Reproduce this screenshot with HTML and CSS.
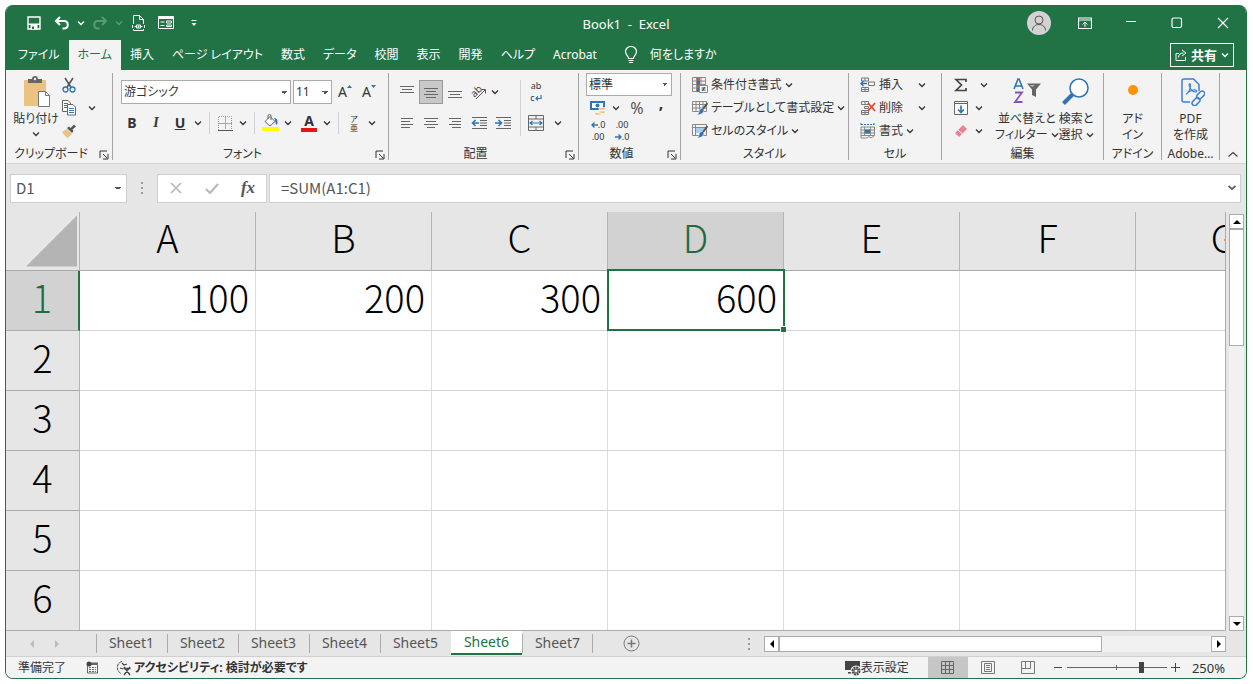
FILE: index.html
```html
<!DOCTYPE html>
<html lang="ja">
<head>
    <meta charset="UTF-8">
    <title>Book1 - Excel</title>
    <link rel="stylesheet" href="styles.css">
</head>
<body>
    <svg class="sprites" aria-hidden="true">
        <symbol id="chevron" viewBox="0 0 8 8"><path d="M1 2.500 4 5.500l3-3" fill="none" stroke="currentColor" stroke-width="1.300"/></symbol>
        <symbol id="launcher" viewBox="0 0 10 10"><path d="M1 8V1h7M4 4l4 4M9 4v5H4" fill="none" stroke="currentColor"/></symbol>
    </svg>

    <div class="window">
        <header class="titlebar">
            <div class="quick-access">
                <button class="qa-btn" aria-label="上書き保存"><svg width="16" height="16" viewBox="0 0 16 16"><path d="M2 2h12v12H2z" fill="none" stroke="#fff" stroke-width="1.400"/><path d="M2 8.500h12V10H2zM4.500 10h7v4.500h-7z" fill="#fff"/><path d="M6 11.500h2v2.500H6z" fill="#217346"/></svg></button>
                <button class="qa-btn" aria-label="元に戻す"><svg width="16" height="16" viewBox="0 0 16 16"><path d="M6 2 2 6l4 4M2.500 6H10c5 0 5 7.500 0 7.500H8.500" fill="none" stroke="#fff" stroke-width="2"/></svg></button>
                <button class="qa-more" aria-label="元に戻す一覧"><svg width="8" height="8"><use href="#chevron"/></svg></button>
                <button class="qa-btn dim" aria-label="やり直し"><svg width="16" height="16" viewBox="0 0 16 16"><path d="m10 2 4 4-4 4M13.500 6H6c-5 0-5 7.500 0 7.500h1.500" fill="none" stroke="currentColor" stroke-width="2"/></svg></button>
                <button class="qa-more dim" aria-label="やり直し一覧"><svg width="8" height="8"><use href="#chevron"/></svg></button>
                <button class="qa-btn" aria-label="印刷プレビュー"><svg width="16" height="16" viewBox="0 0 16 16" fill="none" stroke="#fff"><path d="M3.500 9V.5h6l4 4V9M9.500.5v4h4M3.500 14v1.500h10V14"/><path d="M2.500 10v3M14.500 10v3M4.500 11.500h1.500M11 11.500h1.500"/><path d="M6.500 10h4v3h-4z"/><circle cx="8.500" cy="11.500" r=".6"/></svg></button>
                <button class="qa-btn" aria-label="フォーム"><svg width="16" height="16" viewBox="0 0 16 16" fill="none" stroke="#fff"><path d="M.5 1.500h15v12H.5z"/><path d="M.5 3h15" stroke-width="2"/><path d="M2.500 7h4M2.500 10.500h4M8.500 6h5v2h-5zM8.500 10h5v1.500h-5z"/></svg></button>
                <button class="qa-btn" aria-label="クイックアクセスツールバーのカスタマイズ"><svg width="8" height="8" viewBox="0 0 8 8" fill="#fff"><path d="M1.500 1h5v1h-5zM1.500 4h5L4 7z"/></svg></button>
            </div>
            <div class="doc-title">Book1&nbsp; -&nbsp; Excel</div>
            <div class="window-buttons">
                <button class="avatar" aria-label="アカウント"><svg width="16" height="16" viewBox="0 0 16 16" fill="none" stroke="#555"><circle cx="8" cy="5" r="4"/><path d="M1.500 15.500c0-8 13-8 13 0"/></svg></button>
                <button class="win-btn" aria-label="リボンの表示オプション"><svg width="14" height="12" viewBox="0 0 14 12" fill="none" stroke="#fff"><path d="M.5 1h13v10.500H.5zM.5 3h13" stroke-width="1.200"/><path d="M7 10V5.500M4.500 7.500 7 5l2.500 2.500"/></svg></button>
                <button class="win-btn" aria-label="最小化"><svg width="12" height="12" viewBox="0 0 12 12"><path d="M1 4.500h10" stroke="#fff" stroke-width="1.200"/></svg></button>
                <button class="win-btn" aria-label="最大化"><svg width="12" height="12" viewBox="0 0 12 12"><rect x="1" y="1" width="9.500" height="9.500" rx="1.500" fill="none" stroke="#fff" stroke-width="1.200"/></svg></button>
                <button class="win-btn" aria-label="閉じる"><svg width="12" height="12" viewBox="0 0 12 12"><path d="m1 1 10 10M11 1 1 11" stroke="#fff" stroke-width="1.200"/></svg></button>
            </div>
        </header>

        <nav class="tabs">
            <button class="tab">ファイル</button>
            <button class="tab active">ホーム</button>
            <button class="tab">挿入</button>
            <button class="tab">ページ レイアウト</button>
            <button class="tab">数式</button>
            <button class="tab">データ</button>
            <button class="tab">校閲</button>
            <button class="tab">表示</button>
            <button class="tab">開発</button>
            <button class="tab">ヘルプ</button>
            <button class="tab">Acrobat</button>
            <button class="tab tell-me"><svg width="14" height="18" viewBox="0 0 14 18" fill="none" stroke="#fff" stroke-width="1.200"><path d="M4.500 12.500c0-3-3-3.500-3-7a5.500 5 0 0 1 11 0c0 3.500-3 4-3 7zM4.500 14.500h5M5 16.500h4"/></svg>何をしますか</button>
            <button class="share"><svg width="12" height="12" viewBox="0 0 12 12" fill="none" stroke="#fff"><path d="M4 4.500H1v7h9.500V8M3.500 8.500c0-3 2-4.500 5-4.500M7 1l4 3-4 3"/></svg>共有<svg width="8" height="8"><use href="#chevron"/></svg></button>
        </nav>

        <section class="ribbon">
            <div class="group">
                <div class="group-body clipboard">
                    <button class="big"><svg width="30" height="32" viewBox="0 0 30 32"><path d="M3 4h22v26H3z" fill="#eac282"/><path d="M7 3h4a3 3 0 0 1 6 0h4v4H7z" fill="#666"/><circle cx="14" cy="3" r="1.200" fill="#f3f3f3"/><path d="M17.500 15.500h7l4 4v11h-11z" fill="#fff" stroke="#777"/><path d="M24.500 15.500v4h4" fill="none" stroke="#777"/></svg><span>貼り付け</span><svg width="8" height="8"><use href="#chevron"/></svg></button>
                    <div class="stack">
                        <button class="tool short" aria-label="切り取り"><svg width="14" height="16" viewBox="0 0 14 16" fill="none"><path d="m3 1 6.500 10M11 1 4.500 11" stroke="#555" stroke-width="1.600"/><circle cx="3.500" cy="12.500" r="2.500" stroke="#2f75b5" stroke-width="1.300"/><circle cx="10.500" cy="12.500" r="2.500" stroke="#2f75b5" stroke-width="1.300"/></svg></button>
                        <div class="row"><button class="tool short" aria-label="コピー"><svg width="14" height="16" viewBox="0 0 14 16" fill="#fff" stroke="#666"><path d="M.5.500H6L8.500 3v8.500h-8z"/><path d="M2 3.500h4M2 5.500h4M2 7.500h4" stroke="#2f75b5"/><path d="M5.500 4.500H11L13.500 7v8h-8z"/><path d="M7 8.500h5M7 10.500h5M7 12.500h5" stroke="#2f75b5"/></svg></button><button class="more" aria-label="コピーのオプション"><svg width="8" height="8"><use href="#chevron"/></svg></button></div>
                        <button class="tool short" aria-label="書式のコピー/貼り付け"><svg width="14" height="14" viewBox="0 0 14 14"><path d="m0 8 5-3 5 5-4 4c-2-1-4-3-6-6z" fill="#eac282"/><path d="m5 4 5 5 1.500-2-1-1.500L14 2.500 12 .5 8.500 4 7 2.500z" fill="#555"/></svg></button>
                    </div>
                </div>
                <div class="group-label with-launch">クリップボード<button class="launch" aria-label="クリップボードの設定"><svg width="10" height="10"><use href="#launcher"/></svg></button></div>
            </div>

            <div class="group">
                <div class="group-body font">
                    <div class="row font-pick">
                        <select class="combo font-name" aria-label="フォント"><option>游ゴシック</option></select>
                        <select class="combo font-size" aria-label="フォント サイズ"><option>11</option></select>
                        <button class="tool" aria-label="拡大">A<svg width="5" height="14" viewBox="0 0 5 14"><path d="M0 3h5L2.500 0z" fill="#2f75b5"/></svg></button>
                        <button class="tool" aria-label="縮小">A<svg width="5" height="14" viewBox="0 0 5 14"><path d="M0 0h5L2.500 3z" fill="#2f75b5"/></svg></button>
                    </div>
                    <div class="row">
                        <button class="tool"><b>B</b></button>
                        <button class="tool"><b class="italic">I</b></button>
                        <button class="tool"><b class="underline">U</b></button>
                        <button class="more" aria-label="下線"><svg width="8" height="8"><use href="#chevron"/></svg></button>
                        <i class="sep"></i>
                        <button class="tool" aria-label="罫線"><svg width="15" height="15" viewBox="0 0 15 15" fill="none" stroke="#999"><path d="M.5 14V.5h13V14" stroke-dasharray="1 1"/><path d="M7.500 1v12M1 7.500h13" stroke="#aaa"/><path d="M0 14.500h15" stroke="#555"/></svg></button>
                        <button class="more" aria-label="罫線の種類"><svg width="8" height="8"><use href="#chevron"/></svg></button>
                        <i class="sep"></i>
                        <button class="tool" aria-label="塗りつぶしの色"><svg width="17" height="18" viewBox="0 0 17 18"><path d="m3 7.500 5-5 5 5-5 4.500z" fill="#fff" stroke="#666"/><path d="M6 5V2a1.500 1.500 0 0 1 3 0v4" fill="none" stroke="#666"/><path d="M12 4c4 0 4 4 3 7-2-1-1-4-3-7z" fill="#2f75b5"/><path d="M0 13h17v4H0z" fill="#ff0"/></svg></button>
                        <button class="more" aria-label="塗りつぶしの色の一覧"><svg width="8" height="8"><use href="#chevron"/></svg></button>
                        <button class="tool font-color" aria-label="フォントの色"><b>A</b></button>
                        <button class="more" aria-label="フォントの色の一覧"><svg width="8" height="8"><use href="#chevron"/></svg></button>
                        <i class="sep"></i>
                        <button class="tool ruby"><span>ア</span><span>亜</span></button>
                        <button class="more" aria-label="ふりがな"><svg width="8" height="8"><use href="#chevron"/></svg></button>
                    </div>
                </div>
                <div class="group-label with-launch">フォント<button class="launch" aria-label="フォントの設定"><svg width="10" height="10"><use href="#launcher"/></svg></button></div>
            </div>

            <div class="group">
                <div class="group-body align">
                    <div class="align-tools">
                        <button class="tool" aria-label="上揃え"><svg width="14" height="16" viewBox="0 0 14 16" stroke="#666"><path d="M0 2.500h14M2 5.500h10M0 8.500h14"/></svg></button>
                        <button class="tool pressed" aria-label="上下中央揃え"><svg width="14" height="16" viewBox="0 0 14 16" stroke="#666"><path d="M0 4.500h14M2 7.500h10M0 10.500h14M2 13.500h10"/></svg></button>
                        <button class="tool" aria-label="下揃え"><svg width="14" height="16" viewBox="0 0 14 16" stroke="#666"><path d="M0 7.500h14M2 10.500h10M0 13.500h14"/></svg></button>
                        <button class="tool" aria-label="方向"><svg class="orient" width="16" height="16" viewBox="0 0 16 16"><text x="0" y="11" transform="rotate(-45 5 8)">ab</text><path d="m5 15 9-9M10.500 5.500H14.500v4" fill="none" stroke="#555"/></svg></button>
                        <button class="more" aria-label="方向のオプション"><svg width="8" height="8"><use href="#chevron"/></svg></button>
                        <button class="tool" aria-label="左揃え"><svg width="12" height="12" viewBox="0 0 12 12" stroke="#666"><path d="M0 1.500h12M0 4.500h9M0 7.500h12M0 10.500h9"/></svg></button>
                        <button class="tool" aria-label="中央揃え"><svg width="14" height="12" viewBox="0 0 14 12" stroke="#666"><path d="M0 1.500h14M2 4.500h10M0 7.500h14M3 10.500h8"/></svg></button>
                        <button class="tool" aria-label="右揃え"><svg width="12" height="12" viewBox="0 0 12 12" stroke="#666"><path d="M0 1.500h12M3 4.500h9M0 7.500h12M3 10.500h9"/></svg></button>
                        <button class="tool" aria-label="インデントを減らす"><svg width="16" height="14" viewBox="0 0 16 14" fill="none" stroke="#666"><path d="M1 1.500h15M9 4.500h7M9 7h7M9 9.500h7M1 12.500h15"/><path d="M8 7H1.500M4.500 4l-3 3 3 3" stroke="#2f75b5" stroke-width="1.600"/></svg></button>
                        <button class="tool" aria-label="インデントを増やす"><svg width="16" height="14" viewBox="0 0 16 14" fill="none" stroke="#666"><path d="M1 1.500h15M9 4.500h7M9 7h7M9 9.500h7M1 12.500h15"/><path d="M0 7h6.500M3.500 4l3 3-3 3" stroke="#2f75b5" stroke-width="1.600"/></svg></button>
                    </div>
                    <i class="sep tall"></i>
                    <div class="merge-tools">
                        <button class="tool wrap-text"><span>ab</span><span>c<svg width="7" height="6" viewBox="0 0 7 6" fill="none" stroke="#2f75b5" stroke-width="1.200"><path d="M6 0v3.500H1M3 1.500l-2 2 2 2"/></svg></span></button>
                        <div class="row">
                            <button class="tool" aria-label="セルを結合して中央揃え"><svg width="16" height="16" viewBox="0 0 16 16" fill="none" stroke="#666"><path d="M.5.500h15v15H.5zM.5 4h15M.5 12h15M8 .5V4M8 12v3.500"/><path d="M2 8h12M4.500 6 2 8l2.500 2M11.500 6 14 8l-2.500 2" stroke="#2f75b5" stroke-width="1.200"/></svg></button>
                            <button class="more" aria-label="結合のオプション"><svg width="8" height="8"><use href="#chevron"/></svg></button>
                        </div>
                    </div>
                </div>
                <div class="group-label with-launch">配置<button class="launch" aria-label="配置の設定"><svg width="10" height="10"><use href="#launcher"/></svg></button></div>
            </div>

            <div class="group">
                <div class="group-body number">
                    <select class="combo format" aria-label="数値の書式"><option>標準</option></select>
                    <div class="row">
                        <button class="tool short" aria-label="通貨表示形式"><svg width="16" height="16" viewBox="0 0 16 16"><path d="M1 2h13v7H1z" fill="#fff" stroke="#2f75b5" stroke-width="2"/><circle cx="7.500" cy="5.500" r="2" fill="#2f75b5"/><path d="M9 7.500h6v2.500H9zM9 11h6v2.500H9zM5 12.500h6v2.500H5z" fill="#eac282" stroke="#fff" stroke-width=".5"/></svg></button>
                        <button class="more" aria-label="通貨の一覧"><svg width="8" height="8"><use href="#chevron"/></svg></button>
                        <button class="tool short percent">%</button>
                        <button class="tool short comma">,</button>
                    </div>
                    <div class="row">
                        <button class="tool short decimal"><span><svg width="7" height="6" viewBox="0 0 7 6" fill="none" stroke="#2f75b5" stroke-width="1.400"><path d="M7 3H1M3.500.5 1 3l2.500 2.500"/></svg>.0</span><span>.00</span></button>
                        <button class="tool short decimal"><span>.00</span><span><svg width="7" height="6" viewBox="0 0 7 6" fill="none" stroke="#2f75b5" stroke-width="1.400"><path d="M0 3h6M3.500.5 6 3 3.500 5.500"/></svg>.0</span></button>
                    </div>
                </div>
                <div class="group-label with-launch">数値<button class="launch" aria-label="数値の設定"><svg width="10" height="10"><use href="#launcher"/></svg></button></div>
            </div>

            <div class="group">
                <div class="group-body list">
                    <button class="item"><svg width="16" height="16" viewBox="0 0 16 16" fill="none" stroke="#888"><path d="M.5.500h13v14H.5zM.5 4h13M.5 7.500h13M.5 11h13M4.500.5v14M9 .5v14"/><path d="M5 1h3v3H5zM5 8h3v3H5z" fill="#e0532f" stroke="none"/><path d="M5 4h3v4H5zM5 11h2v4H5z" fill="#2f75b5" stroke="none"/><path d="M7.500 8.500h8v7h-8z" fill="#fff"/><path d="M9.500 11h4M9.500 13h4M12.500 10l-2 4" stroke="#444"/></svg>条件付き書式<svg width="8" height="8"><use href="#chevron"/></svg></button>
                    <button class="item"><svg width="16" height="16" viewBox="0 0 16 16" fill="none" stroke="#888"><path d="M.5 1.500h14v10H.5zM.5 4.500h14M.5 8h14M4 1.500v10M7.500 1.500v10M11 1.500v10"/><path d="M7 12c0-3 2-4 4-3.500l1 1.500c0 3-3 5-8 5 2-.5 2.500-1.500 3-3z" fill="#2f75b5" stroke="#fff" stroke-width=".6"/><path d="m11 9 4.500-6" stroke="#555" stroke-width="2"/></svg>テーブルとして書式設定<svg width="8" height="8"><use href="#chevron"/></svg></button>
                    <button class="item"><svg width="16" height="16" viewBox="0 0 16 16" fill="none" stroke="#888"><path d="M.5 1.500h14v11H.5zM.5 4.500h14M3.500 1.500v11"/><path d="M4 5h8v5H4z" fill="#a9cdec" stroke="none"/><path d="M7 12c0-3 2-4 4-3.500l1 1.500c0 3-3 5-8 5 2-.5 2.500-1.500 3-3z" fill="#2f75b5" stroke="#fff" stroke-width=".6"/><path d="m11 9 4.500-6" stroke="#555" stroke-width="2"/></svg>セルのスタイル<svg width="8" height="8"><use href="#chevron"/></svg></button>
                </div>
                <div class="group-label">スタイル</div>
            </div>

            <div class="group">
                <div class="group-body list">
                    <button class="item spread"><svg width="16" height="16" viewBox="0 0 16 16" fill="none" stroke="#777"><path d="M1.500 1h7v3h-7zM5 1v3M1.500 10.500h7v4h-7zM5 10.500v4M1.500 12.500h7M8.500 5h6v3.500h-6z"/><path d="M7 6.500H1M3.500 4 1 6.500 3.500 9" stroke="#2f75b5" stroke-width="1.500"/></svg><span>挿入</span><svg width="8" height="8"><use href="#chevron"/></svg></button>
                    <button class="item spread"><svg width="16" height="16" viewBox="0 0 16 16" fill="none" stroke="#777"><path d="M1.500 1.500h7v3h-7zM5 1.500v3M1.500 10.500h7v4h-7zM5 10.500v4M1.500 12.500h7M4.500 6.500h4v2h-4z"/><path d="m8 3 7 8M15 3l-7 8" stroke="#e0452a" stroke-width="1.700"/></svg><span>削除</span><svg width="8" height="8"><use href="#chevron"/></svg></button>
                    <button class="item"><svg width="16" height="16" viewBox="0 0 16 16" fill="none" stroke="#888"><path d="M1 1.500h13M1 0v3M14 0v3" stroke="#2f75b5" stroke-dasharray="2 1"/><path d="M1 4h13.500v8.500H1zM1 7h13M1 10h13M4.500 4v9M10.500 4v9M1 12.500v2.500h6l2-1.500 2 1.500 3-2"/><path d="M5 6.500h5v4H5z" fill="#2f75b5" stroke="none"/></svg>書式<svg width="8" height="8"><use href="#chevron"/></svg></button>
                </div>
                <div class="group-label">セル</div>
            </div>

            <div class="group">
                <div class="group-body editing">
                    <div class="stack">
                        <div class="row wide"><button class="tool short" aria-label="オート SUM"><svg width="14" height="14" viewBox="0 0 14 14" fill="none" stroke="#444" stroke-width="1.700"><path d="M12 4V1.500H2L7.500 7 2 12.500h10V10"/></svg></button><button class="more" aria-label="オート SUM の一覧"><svg width="8" height="8"><use href="#chevron"/></svg></button></div>
                        <div class="row"><button class="tool short" aria-label="フィル"><svg width="14" height="14" viewBox="0 0 14 14" fill="#fff" stroke="#666"><path d="M.5.500h13v13H.5zM.5 2.500h13"/><path d="M7 4.500v7M4 8.500l3 3 3-3" fill="none" stroke="#2f75b5" stroke-width="1.700"/></svg></button><button class="more" aria-label="フィルの一覧"><svg width="8" height="8"><use href="#chevron"/></svg></button></div>
                        <div class="row"><button class="tool short" aria-label="クリア"><svg width="14" height="14" viewBox="0 0 14 14"><path d="m1 9 8-8 4 4-8 8z" fill="#e8829a"/><path d="m4 6 4.500 4" stroke="#fff"/></svg></button><button class="more" aria-label="クリアの一覧"><svg width="8" height="8"><use href="#chevron"/></svg></button></div>
                    </div>
                    <button class="big"><svg width="30" height="30" viewBox="0 0 30 30" fill="none"><path d="M2 13 6 3h1l4 10M3.500 10h6" stroke="#2f75b5" stroke-width="1.600"/><path d="M3 16.500h7L3 26h7.500" stroke="#8a52b8" stroke-width="1.800"/><path d="M15 7.500h14l-5 6V21l-4-2v-5.500z" fill="#666"/><path d="M17.500 9h5l-2 2z" fill="#bbb"/></svg><span>並べ替えと</span><span>フィルター <svg width="8" height="8"><use href="#chevron"/></svg></span></button>
                    <button class="big"><svg width="30" height="30" viewBox="0 0 30 30" fill="none"><circle cx="18" cy="12" r="9" fill="#fff" stroke="#2f75b5" stroke-width="1.600"/><path d="m11.500 18.500-9 9" stroke="#2f75b5" stroke-width="4"/></svg><span>検索と</span><span>選択 <svg width="8" height="8"><use href="#chevron"/></svg></span></button>
                </div>
                <div class="group-label">編集</div>
            </div>

            <div class="group">
                <div class="group-body centered">
                    <button class="big"><svg width="30" height="30" viewBox="0 0 30 30"><circle cx="15" cy="14" r="5" fill="#ff9208"/></svg><span>アド</span><span>イン</span></button>
                </div>
                <div class="group-label">アドイン</div>
            </div>

            <div class="group">
                <div class="group-body centered">
                    <button class="big"><svg width="30" height="30" viewBox="0 0 30 30" fill="none" stroke="#3f7fd9" stroke-width="1.500"><path d="M15 26H9a2 2 0 0 1-2-2V5a2 2 0 0 1 2-2h9.500L24 8.500V15"/><path d="M11 18.500c2-1.500 5-6 4.500-10-.5-2-2-.5-1 2s3.500 5.500 6 5.500 1-2.500-2-2-5.500 2-7.500 4.500z" stroke-width="1.100"/><rect x="21" y="17" width="9" height="5" rx="2.500" transform="rotate(-45 25 19)"/><rect x="16" y="23" width="9" height="5" rx="2.500" transform="rotate(-45 21 25)"/></svg><span>PDF</span><span>を作成</span></button>
                </div>
                <div class="group-label">Adobe…</div>
            </div>
            <button class="collapse" aria-label="リボンを折りたたむ"><svg width="12" height="8" viewBox="0 0 12 8"><path d="m1.500 6.500 4.500-4 4.500 4" fill="none" stroke="#444" stroke-width="1.200"/></svg></button>
        </section>

        <section class="formula-bar">
            <select class="combo name-box" aria-label="名前ボックス"><option>D1</option></select>
            <svg class="grip" width="3" height="12" viewBox="0 0 3 12" fill="#999"><path d="M0 0h2v2H0zM0 5h2v2H0zM0 10h2v2H0z"/></svg>
            <div class="fx-box">
                <button class="fx-btn" aria-label="キャンセル"><svg width="14" height="14" viewBox="0 0 14 14"><path d="m2 2 10 10M12 2 2 12" stroke="#b8b8b8" stroke-width="1.600"/></svg></button>
                <button class="fx-btn" aria-label="入力"><svg width="14" height="14" viewBox="0 0 14 14"><path d="m1 8 4 4 8-9" fill="none" stroke="#b8b8b8" stroke-width="2.200"/></svg></button>
                <button class="fx-btn fx">fx</button>
            </div>
            <div class="formula">
                <input type="text" value="=SUM(A1:C1)" aria-label="数式バー">
                <svg width="10" height="8" viewBox="0 0 10 8"><path d="m1.500 2 3.500 3L8.500 2" fill="none" stroke="#666" stroke-width="2"/></svg>
            </div>
        </section>

        <main class="sheet-area">
            <div class="sheet">
                <table>
                    <thead>
                        <tr><th class="select-all"></th><th>A</th><th>B</th><th>C</th><th class="current">D</th><th>E</th><th>F</th><th>G</th></tr>
                    </thead>
                    <tbody>
                        <tr><th class="current">1</th><td>100</td><td>200</td><td>300</td><td class="selected">600</td><td></td><td></td><td></td></tr>
                        <tr><th>2</th><td></td><td></td><td></td><td></td><td></td><td></td><td></td></tr>
                        <tr><th>3</th><td></td><td></td><td></td><td></td><td></td><td></td><td></td></tr>
                        <tr><th>4</th><td></td><td></td><td></td><td></td><td></td><td></td><td></td></tr>
                        <tr><th>5</th><td></td><td></td><td></td><td></td><td></td><td></td><td></td></tr>
                        <tr><th>6</th><td></td><td></td><td></td><td></td><td></td><td></td><td></td></tr>
                    </tbody>
                </table>
            </div>
            <div class="v-scroll">
                <button class="scroll-btn" aria-label="上へ"><svg width="8" height="8" viewBox="0 0 8 8"><path d="M0 6h8L4 2z"/></svg></button>
                <div class="thumb"></div>
                <button class="scroll-btn end" aria-label="下へ"><svg width="8" height="8" viewBox="0 0 8 8"><path d="M0 2h8L4 6z"/></svg></button>
            </div>
        </main>

        <div class="sheet-bar">
            <div class="sheet-nav">
                <button aria-label="前のシート"><svg width="6" height="8" viewBox="0 0 6 8"><path d="M5 0v8L1 4z" fill="#bbb"/></svg></button>
                <button aria-label="次のシート"><svg width="6" height="8" viewBox="0 0 6 8"><path d="M1 0v8l4-4z" fill="#bbb"/></svg></button>
            </div>
            <div class="sheet-tabs">
                <button class="sheet-tab">Sheet1</button>
                <button class="sheet-tab">Sheet2</button>
                <button class="sheet-tab">Sheet3</button>
                <button class="sheet-tab">Sheet4</button>
                <button class="sheet-tab">Sheet5</button>
                <button class="sheet-tab active">Sheet6</button>
                <button class="sheet-tab">Sheet7</button>
            </div>
            <button class="add-sheet" aria-label="新しいシート"><svg width="17" height="17" viewBox="0 0 17 17" fill="none" stroke="#777"><circle cx="8.500" cy="8.500" r="7.500"/><path d="M8.500 4.500v8M4.500 8.500h8" stroke-width="1.500"/></svg></button>
            <svg class="grip" width="3" height="12" viewBox="0 0 3 12" fill="#999"><path d="M0 0h2v2H0zM0 5h2v2H0zM0 10h2v2H0z"/></svg>
            <div class="h-scroll">
                <button class="scroll-btn" aria-label="左へ"><svg width="8" height="8" viewBox="0 0 8 8"><path d="M6 0v8L2 4z"/></svg></button>
                <div class="thumb"></div>
                <button class="scroll-btn end" aria-label="右へ"><svg width="8" height="8" viewBox="0 0 8 8"><path d="M2 0v8l4-4z"/></svg></button>
            </div>
        </div>

        <footer class="status-bar">
            <span class="ready">準備完了</span>
            <button class="macro" aria-label="マクロの記録"><svg width="13" height="13" viewBox="0 0 13 13" fill="none" stroke="#666"><path d="M1.500 3.500h10v8.500h-10z"/><path d="M3 6.500h7M3 8.500h7M3 10.500h7" stroke-dasharray="2 1"/><path d="M5 2.500h7" stroke-width="2"/><circle cx="3" cy="3" r="2.500" fill="#444" stroke="none"/></svg></button>
            <button class="access"><svg width="16" height="16" viewBox="0 0 16 16" fill="none" stroke="#444"><path d="M6 1.500C0 3 0 11 5 13.500" stroke-dasharray="3 1"/><path d="m6 3 2 2 3-1M4 8l3 1M8 7l6 8M14 7l-6 8M7.500 8.500h7" stroke-width="1.300"/></svg>アクセシビリティ: 検討が必要です</button>
            <button class="display"><svg width="16" height="16" viewBox="0 0 16 16"><path d="M0 1h15v9H0zM3 12h6v1.500H3z" fill="#444"/><circle cx="11" cy="11" r="3.500" fill="#f3f3f3" stroke="#f3f3f3" stroke-width="4"/><circle cx="11" cy="11" r="3.500" fill="none" stroke="#444" stroke-width="2" stroke-dasharray="2 .7"/><circle cx="11" cy="11" r="2" fill="none" stroke="#444"/></svg>表示設定</button>
            <button class="view active" aria-label="標準"><svg width="14" height="14" viewBox="0 0 14 14" fill="none" stroke="#666"><path d="M.5.500h12v12H.5zM4.500.5v12M8.500.5v12M.5 4.500h12M.5 8.500h12"/></svg></button>
            <button class="view" aria-label="ページ レイアウト"><svg width="14" height="14" viewBox="0 0 14 14" fill="none" stroke="#777"><path d="M.5.500h13v12H.5zM3.500 2.500h7v8h-7zM5 4.500h4M5 6.500h4M5 8.500h4"/></svg></button>
            <button class="view" aria-label="改ページ プレビュー"><svg width="14" height="14" viewBox="0 0 14 14" fill="none" stroke="#777"><path d="M.5.500h13v12H.5zM4.500.5v7M9.500.5v7M.5 7.500h9"/></svg></button>
            <div class="zoom">
                <button aria-label="縮小"><svg width="9" height="9" viewBox="0 0 9 9"><path d="M0 4.500h8" stroke="#444"/></svg></button>
                <input type="range" min="0" max="100" value="76" aria-label="ズーム">
                <button aria-label="拡大"><svg width="9" height="9" viewBox="0 0 9 9"><path d="M0 4.500h9M4.500 0v9" stroke="#444"/></svg></button>
            </div>
            <span class="zoom-value">250%</span>
        </footer>
    </div>
</body>
</html>
```

FILE: styles.css
```css
* {
    box-sizing: border-box;
}
body {
    margin: 0;
    height: 100vh;
    padding: 5px 6px 5px 5px;
    background-color: #fff;
    font-family: "Noto Sans", "Noto Sans CJK JP", sans-serif;
    font-size: 12px;
    line-height: 16px;
    font-feature-settings: "palt";
    color: #333;
}
button, input, select {
    font: inherit;
    font-feature-settings: inherit;
    color: inherit;
    background: none;
    border: none;
    border-radius: 0;
    margin: 0;
    padding: 0;
}
button {
    display: flex;
    align-items: center;
    justify-content: center;
    white-space: nowrap;
}
svg {
    display: block;
    flex: none;
}
.sprites {
    position: absolute;
    width: 0;
    height: 0;
}
.window {
    display: flex;
    flex-direction: column;
    height: 100%;
    border: 1px solid #217346;
    border-top: none;
    border-radius: 8px;
    overflow: hidden;
    background-color: #e6e6e6;
}
.row {
    display: flex;
    align-items: center;
}

/* title bar */
.titlebar {
    display: grid;
    grid-template-columns: 1fr auto 1fr;
    height: 35px;
    flex: none;
    background-color: #217346;
    color: #fff;
}
.quick-access {
    display: flex;
    align-items: center;
    padding-left: 14px;
}
.qa-btn {
    width: 28px;
    height: 28px;
}
.qa-more {
    width: 10px;
    height: 28px;
}
.dim {
    color: #5b9a78;
}
.doc-title {
    align-self: center;
    padding-top: 2px;
    font-size: 13px;
}
.window-buttons {
    display: flex;
    justify-content: flex-end;
    align-items: center;
}
.avatar {
    width: 24px;
    height: 24px;
    margin-right: 11px;
    border-radius: 50%;
    background-color: #d2d2d2;
}
.win-btn {
    width: 46px;
    height: 32px;
}

/* ribbon tabs */
.tabs {
    display: flex;
    height: 30px;
    flex: none;
    padding-left: 3px;
    background-color: #217346;
    color: #fff;
}
.tab {
    padding: 0 9px;
}
.tab.active {
    background-color: #f3f3f3;
    color: #217346;
}
.tell-me {
    gap: 12px;
    padding-left: 18px;
}
.share {
    align-self: center;
    height: 24px;
    margin: 0 12px 0 auto;
    padding: 0 4px;
    gap: 4px;
    border: 1px solid #fff;
    font-size: 13px;
    font-weight: bold;
}

/* ribbon */
.ribbon {
    display: grid;
    grid-template-columns: 107px 276px 190px 102px 168px 93px 162px 58px 58px 1fr;
    height: 94px;
    flex: none;
    padding: 3px 0;
    background-color: #f3f3f3;
    border-bottom: 1px solid #d6d6d6;
}
.group {
    display: flex;
    flex-direction: column;
    border-right: 1px solid #a5a5a5;
}
.group-body {
    flex: 1;
    display: flex;
}
.group-label {
    position: relative;
    padding: 0 2px;
    line-height: 12px;
    text-align: center;
}
.group-label.with-launch {
    padding-right: 18px;
}
.launch {
    position: absolute;
    right: 3px;
    bottom: 0;
}
.tool {
    width: 24px;
    height: 24px;
}
.tool.short {
    height: 23px;
}
.tool b {
    font-size: 14px;
}
.more {
    width: 12px;
    height: 23px;
}
.sep {
    width: 1px;
    height: 22px;
    margin: 0 3px 0 5px;
    background-color: #d0d0d0;
}
.sep.tall {
    height: 56px;
}
.combo {
    appearance: none;
    height: 24px;
    padding: 0 2px;
    border: 1px solid #ababab;
    background-color: #fff;
    background-image: linear-gradient(45deg, transparent 50%, #555 50%), linear-gradient(135deg, #555 50%, transparent 50%);
    background-position: right 6px center, right 3px center;
    background-size: 3px 3px;
    background-repeat: no-repeat;
}
.big {
    flex-direction: column;
    justify-content: flex-start;
}
.big > svg:first-child {
    margin-bottom: 5px;
}
.big span {
    display: flex;
    align-items: center;
    gap: 3px;
}
.stack {
    display: flex;
    flex-direction: column;
}
.clipboard {
    padding: 0 9px;
}
.clipboard .big {
    width: 42px;
    padding-top: 3px;
}
.clipboard .big > svg:first-child {
    margin-bottom: 3px;
}
.clipboard .big > svg:last-child {
    margin-top: 3px;
}
.clipboard .more {
    width: 22px;
}
.font {
    flex-direction: column;
    gap: 7px;
    padding: 7px 7px 0;
}
.font-pick {
    padding-left: 1px;
    gap: 2px;
}
.font-name {
    width: 170px;
}
.font-size {
    width: 39px;
}
.font-pick .tool {
    font-size: 14px;
    width: 22px;
}
.italic {
    font-family: "Liberation Serif", serif;
    font-style: italic;
}
.underline {
    text-decoration: underline;
}
.font-color {
    width: 16px;
    height: 18px;
    margin: 0 4px 0 7px;
    border-bottom: 4px solid #e81313;
}
.ruby {
    flex-direction: column;
    font-size: 8px;
    line-height: 9px;
}
.align {
    padding: 7px 6px 0;
}
.align-tools {
    display: grid;
    grid-template-columns: repeat(5, 24px);
    grid-auto-rows: 24px;
    row-gap: 7px;
}
.align-tools .more {
    justify-content: flex-start;
}
.pressed {
    background-color: #c8c8c8;
    border: 1px solid #999;
}
.orient {
    overflow: visible;
    font-size: 10px;
    fill: #444;
}
.merge-tools {
    display: flex;
    flex-direction: column;
    gap: 7px;
}
.merge-tools .more {
    width: 20px;
}
.wrap-text, .decimal {
    flex-direction: column;
    font-size: 9px;
    line-height: 12px;
}
.wrap-text span, .decimal span {
    display: flex;
    align-items: center;
}
.number {
    flex-direction: column;
    padding: 0 7px;
}
.format {
    width: 86px;
    height: 23px;
}
.percent {
    margin-left: 3px;
    font-size: 16px;
    color: #555;
}
.comma {
    padding-bottom: 10px;
    font-size: 16px;
    font-weight: bold;
}
.list {
    flex-direction: column;
    padding: 0 11px;
}
.item {
    height: 23px;
    gap: 3px;
    justify-content: flex-start;
}
.spread span {
    width: 36px;
    text-align: left;
}
.editing {
    padding: 0 7px;
}
.editing .stack {
    width: 46px;
}
.editing .wide .more {
    width: 24px;
}
.editing .big, .centered .big {
    padding-top: 3px;
}
.centered {
    justify-content: center;
}
.collapse {
    align-self: end;
    height: 12px;
}

/* formula bar */
.formula-bar {
    display: flex;
    align-items: center;
    flex: none;
    height: 48px;
    padding: 0 5px 0 4px;
    color: #555;
    font-family: "Noto Sans CJK JP", sans-serif;
    font-size: 15px;
}
.name-box {
    width: 117px;
    height: 29px;
    padding: 0 5px;
    border-color: #cfcfcf;
    background-position: right 8px center, right 5px center;
}
.grip {
    margin: 0 13px 0 14px;
}
.fx-box {
    display: flex;
    width: 110px;
    height: 29px;
    margin-right: 2px;
    background-color: #fff;
    border: 1px solid #cfcfcf;
}
.fx-btn {
    flex: 1;
}
.fx {
    font-family: "Liberation Serif", serif;
    font-style: italic;
    font-weight: bold;
    font-size: 17px;
}
.formula {
    flex: 1;
    display: flex;
    align-items: center;
    height: 29px;
    padding: 0 3px 0 11px;
    background-color: #fff;
    border: 1px solid #cfcfcf;
}
.formula input {
    flex: 1;
    min-width: 0;
}

/* worksheet */
.sheet-area {
    flex: 1;
    display: flex;
    min-height: 0;
}
.sheet {
    flex: 1;
    min-width: 0;
    overflow: hidden;
    border-right: 1px solid #ababab;
    border-bottom: 1px solid #ababab;
}
.sheet table {
    width: 1306px;
    table-layout: fixed;
    border-collapse: separate;
    border-spacing: 0;
    font-family: "Noto Sans CJK JP", sans-serif;
    font-size: 38px;
    line-height: 48px;
    font-weight: 300;
    color: #000;
}
.sheet th {
    width: 176px;
    padding: 0 0 8px;
    font-weight: 300;
    background-color: #e6e6e6;
    border-right: 1px solid #b4b4b4;
    border-bottom: 1px solid #ababab;
}
.sheet thead th {
    height: 59px;
}
.sheet tbody th, .sheet .select-all {
    width: 74px;
}
.sheet .select-all {
    padding: 0;
}
.sheet .select-all::after {
    content: "";
    display: block;
    width: 51px;
    height: 51px;
    margin-left: 20px;
    background-color: #b4b4b4;
    clip-path: polygon(100% 0, 100% 100%, 0 100%);
}
.sheet .current {
    background-color: #d2d2d2;
    color: #1e6b41;
}
.sheet tbody .current {
    border-right: 2px solid #217346;
}
.sheet td {
    height: 60px;
    padding: 0 6px 8px;
    text-align: right;
    background-color: #fff;
    border-right: 1px solid #dcdcdc;
    border-bottom: 1px solid #d4d4d4;
}
.selected {
    position: relative;
}
/* cell cursor and its fill handle */
.selected::before {
    content: "";
    position: absolute;
    inset: -2px -2px -1px -1px;
    border: 2px solid #217346;
}
.selected::after {
    content: "";
    position: absolute;
    right: -3px;
    bottom: -2px;
    width: 5px;
    height: 5px;
    background-color: #217346;
    border: 1px solid #fff;
    border-width: 1px 0 0 1px;
}
.v-scroll {
    display: flex;
    flex-direction: column;
    width: 15px;
    margin: 2px 2px 0 3px;
    background-color: #f1f1f1;
}
.scroll-btn {
    width: 15px;
    height: 15px;
    flex: none;
    background-color: #fff;
    border: 1px solid #ababab;
}
.scroll-btn.end {
    margin-top: auto;
}
.thumb {
    background-color: #fff;
    border: 1px solid #ababab;
}
.v-scroll .thumb {
    height: 28%;
}

/* sheet tabs */
.sheet-bar {
    display: flex;
    align-items: center;
    flex: none;
    height: 26px;
    padding-right: 20px;
    border-bottom: 1px solid #d0d0d0;
    color: #555;
    font-size: 14px;
}
.sheet-nav {
    display: flex;
    justify-content: center;
    gap: 19px;
    width: 76px;
    margin-right: 14px;
}
.sheet-tabs {
    display: flex;
    align-self: flex-start;
}
.sheet-tab {
    width: 71px;
    height: 24px;
    background: linear-gradient(#ababab, #ababab) left center / 1px 19px no-repeat;
}
.sheet-tab:last-child {
    background-image: linear-gradient(#ababab, #ababab), linear-gradient(#ababab, #ababab);
    background-position: left center, right center;
}
.sheet-tab.active {
    background: #fff;
    border-bottom: 2px solid #217346;
    color: #217346;
}
.add-sheet {
    margin-left: 30px;
    margin-right: auto;
}
.h-scroll {
    display: flex;
    width: 462px;
    height: 16px;
    background-color: #f1f1f1;
}
.h-scroll .scroll-btn {
    height: 16px;
}
.h-scroll .scroll-btn.end {
    margin: 0 0 0 auto;
}
.h-scroll .thumb {
    width: 70%;
}

/* status bar */
.status-bar {
    display: flex;
    align-items: center;
    flex: none;
    height: 21px;
    padding: 0 21px 0 12px;
    background-color: #f3f3f3;
}
.macro {
    margin: 0 17px 0 20px;
}
.access {
    gap: 2px;
    font-weight: bold;
}
.display {
    margin-left: auto;
    margin-right: 19px;
}
.view {
    width: 40px;
    height: 21px;
}
.view.active {
    background-color: #c6c6c6;
}
.zoom {
    display: flex;
    align-items: center;
    gap: 4px;
    margin: 0 12px 0 6px;
}
.zoom input {
    appearance: none;
    width: 100px;
    height: 15px;
    background: linear-gradient(#666, #666) center / 100% 1px no-repeat, linear-gradient(#666, #666) center / 1px 5px no-repeat;
}
.zoom input::-webkit-slider-thumb {
    appearance: none;
    width: 5px;
    height: 11px;
    background-color: #444;
}
.zoom-value {
    font-size: 13px;
}
```
